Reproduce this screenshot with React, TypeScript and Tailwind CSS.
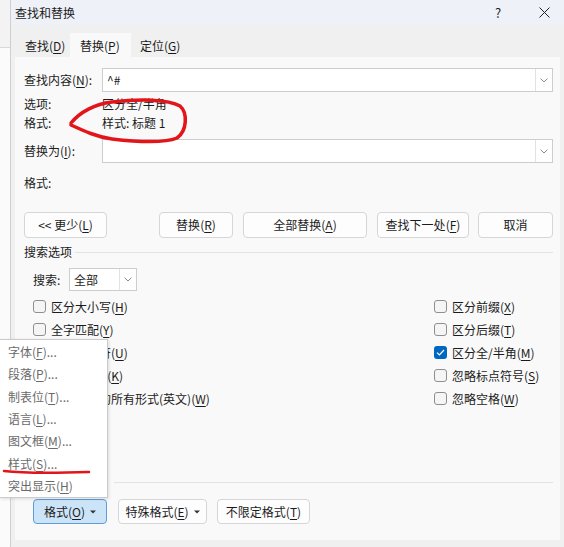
import React from 'react'

// access-key label: 查找内容(N):
function Acc({ t, k, end = '' }: { t: string; k: string; end?: string }) {
  return (
    <>
      {t}(<span className="underline decoration-1 underline-offset-2">{k}</span>){end}
    </>
  )
}

function Chevron() {
  return (
    <svg width="8" height="5" viewBox="0 0 8 5">
      <path d="M0.5 0.5 L4 4 L7.5 0.5" fill="none" stroke="#8c8c8c" strokeWidth="1" />
    </svg>
  )
}

function Caret() {
  return (
    <svg width="6" height="4" viewBox="0 0 6 4" className="ml-[5px]">
      <path d="M0 0.5 L6 0.5 L3 3.5 Z" fill="#333" />
    </svg>
  )
}

function Btn({ w, children, className = '' }: { w: string; children: React.ReactNode; className?: string }) {
  return (
    <div
      className={`flex h-full items-center justify-center rounded-[4px] border border-[#d6d6d6] bg-[#fdfdfd] ${w} ${className}`}
    >
      {children}
    </div>
  )
}

function Check({ t, k, checked = false }: { t: string; k: string; checked?: boolean }) {
  return (
    <div className="flex h-[23px] items-center">
      {checked ? (
        <span className="mr-[5px] flex h-[13px] w-[13px] items-center justify-center rounded-[3px] bg-[#0067c0]">
          <svg width="9" height="7" viewBox="0 0 9 7">
            <path d="M1 3.6 L3.4 6 L8 1" fill="none" stroke="#fff" strokeWidth="1.2" />
          </svg>
        </span>
      ) : (
        <span className="mr-[5px] h-[13px] w-[13px] rounded-[3px] border border-[#8f8f8f] bg-[#f5f5f5]" />
      )}
      <span>
        <Acc t={t} k={k} />
      </span>
    </div>
  )
}

const menuItems: [string, string, string][] = [
  ['字体', 'F', '...'],
  ['段落', 'P', '...'],
  ['制表位', 'T', '...'],
  ['语言', 'L', '...'],
  ['图文框', 'M', '...'],
  ['样式', 'S', '...'],
  ['突出显示', 'H', ''],
]

export default function App() {
  return (
    <div className="relative flex h-[547px] w-[564px] overflow-hidden bg-[#fbfbfb] font-['Noto_Sans_CJK_SC','Microsoft_YaHei',sans-serif] text-[12px] text-[#1b1b1b]">
      {/* window behind the dialog */}
      <div className="w-[10px] shrink-0">
        <div className="h-[48px] border-b border-[#d9d9d9] bg-[#f3f3f3]" />
      </div>

      {/* dialog */}
      <div className="flex flex-1 flex-col border-l border-[#cfcfcf] bg-[#f0f0f0]">
        {/* title bar */}
        <div className="flex h-[25px] shrink-0 items-center bg-[#eef2f8] pl-[4px]">
          <span>查找和替换</span>
          <span className="ml-auto flex w-[52px] justify-center text-[13px]">?</span>
          <span className="flex w-[40px] justify-center">
            <svg width="11" height="11" viewBox="0 0 11 11">
              <path d="M0.5 0.5 L10.5 10.5 M10.5 0.5 L0.5 10.5" stroke="#222" strokeWidth="1" />
            </svg>
          </span>
        </div>

        {/* tabs */}
        <div className="flex h-[32px] shrink-0 items-end pl-[4px]">
          <div className="flex h-[24px] w-[55px] items-center pl-[10px] pt-[2px]">
            <Acc t="查找" k="D" />
          </div>
          <div className="flex h-[24px] w-[61px] items-center bg-[#f9f9f9] pl-[10px] pt-[2px]">
            <Acc t="替换" k="P" />
          </div>
          <div className="flex h-[24px] items-center pl-[9px] pt-[2px]">
            <Acc t="定位" k="G" />
          </div>
        </div>

        {/* page */}
        <div className="ml-[4px] flex h-[483px] w-[545px] flex-col bg-[#f9f9f9] pl-[9px] pr-[7px] pt-[11px]">
          <div className="flex h-[24px]">
            <div className="flex w-[78px] items-center">
              <Acc t="查找内容" k="N" end=":" />
            </div>
            <div className="flex flex-1 border border-[#cdcdcd] bg-white">
              <div className="flex flex-1 items-center pl-[4px]">^#</div>
              <div className="flex w-[17px] items-center justify-center border-l border-[#e2e2e2]">
                <Chevron />
              </div>
            </div>
          </div>

          <div className="mt-[2px] flex h-[19px] items-center">
            <span className="w-[78px]">选项:</span>
            <span>区分全/半角</span>
          </div>
          <div className="flex h-[19px] items-center">
            <span className="w-[78px]">格式:</span>
            <span>样式: 标题 1</span>
          </div>

          <div className="mt-[7px] flex h-[24px]">
            <div className="flex w-[78px] items-center">
              <Acc t="替换为" k="I" end=":" />
            </div>
            <div className="flex flex-1 border border-[#cdcdcd] bg-white">
              <div className="flex-1" />
              <div className="flex w-[17px] items-center justify-center border-l border-[#e2e2e2]">
                <Chevron />
              </div>
            </div>
          </div>

          <div className="mt-[10px] flex h-[20px] items-center">格式:</div>

          {/* action buttons */}
          <div className="mt-[19px] flex h-[26px]">
            <Btn w="w-[83px]">
              {'<< '}更少(<span className="underline decoration-1 underline-offset-2">L</span>)
            </Btn>
            <Btn w="w-[74px]" className="ml-[52px]">
              <Acc t="替换" k="R" />
            </Btn>
            <Btn w="w-[124px]" className="ml-[10px]">
              <Acc t="全部替换" k="A" />
            </Btn>
            <Btn w="w-[92px]" className="ml-[10px]">
              <Acc t="查找下一处" k="F" />
            </Btn>
            <Btn w="w-[75px]" className="ml-[9px]">
              取消
            </Btn>
          </div>

          {/* search options */}
          <div className="mt-[5px] flex h-[18px] items-center">
            <span>搜索选项</span>
            <div className="ml-[3px] h-px flex-1 bg-[#e3e3e3]" />
          </div>

          <div className="mt-[7px] flex h-[23px] items-center pl-[9px]">
            <span className="w-[36px]">搜索:</span>
            <div className="flex h-full w-[68px] border border-[#cdcdcd] bg-white">
              <div className="flex flex-1 items-center pl-[4px]">全部</div>
              <div className="flex w-[17px] items-center justify-center border-l border-[#e2e2e2]">
                <Chevron />
              </div>
            </div>
          </div>

          <div className="mt-[4px] flex pl-[9px]">
            <div className="flex w-[401px] flex-col">
              <Check t="区分大小写" k="H" />
              <Check t="全字匹配" k="Y" />
              <Check t="使用通配符" k="U" />
              <Check t="同音(英文)" k="K" />
              <Check t="查找单词的所有形式(英文)" k="W" />
            </div>
            <div className="flex flex-col">
              <Check t="区分前缀" k="X" />
              <Check t="区分后缀" k="T" />
              <Check t="区分全/半角" k="M" checked />
              <Check t="忽略标点符号" k="S" />
              <Check t="忽略空格" k="W" />
            </div>
          </div>

          {/* replace section (its label sits under the popup menu) */}
          <div className="mt-[63px] flex h-[18px] items-center pl-[90px]">
            <div className="h-px flex-1 bg-[#e3e3e3]" />
          </div>

          <div className="mt-[8px] flex h-[25px] pl-[9px]">
            <div className="flex h-full w-[74px] items-center justify-center rounded-[4px] border border-[#5c9ddb] bg-[#cce4f7]">
              <Acc t="格式" k="O" />
              <Caret />
            </div>
            <Btn w="w-[89px]" className="ml-[11px]">
              <Acc t="特殊格式" k="E" />
              <Caret />
            </Btn>
            <Btn w="w-[93px]" className="ml-[10px]">
              <Acc t="不限定格式" k="T" />
            </Btn>
          </div>
        </div>
      </div>

      {/* format popup menu */}
      <div className="absolute left-0 top-[339px] flex h-[159px] w-[108px] flex-col border border-l-0 border-[#cbcbcb] bg-white pt-[1px] text-[#6a6a6a] shadow-[1px_1px_3px_rgba(0,0,0,0.12)]">
        {menuItems.map(([t, k, end]) => (
          <div key={t} className="flex h-[22.5px] items-center pl-[8px]">
            <Acc t={t} k={k} end={end} />
          </div>
        ))}
      </div>

      {/* red annotations */}
      <svg className="pointer-events-none absolute left-0 top-0" width="564" height="547" viewBox="0 0 564 547">
        <path
          d="M71 123 C80 112, 95 104, 112 102 C138 99, 168 99, 180 106 C188 113, 187 131, 177 138 C165 143, 138 142, 112 139 C97 137, 84 131, 71 125"
          fill="none"
          stroke="#e3151a"
          strokeWidth="3.5"
          strokeLinecap="round"
        />
        <path d="M4 471 C30 474, 60 473, 89 472" fill="none" stroke="#e3151a" strokeWidth="2.5" strokeLinecap="round" />
      </svg>
    </div>
  )
}
